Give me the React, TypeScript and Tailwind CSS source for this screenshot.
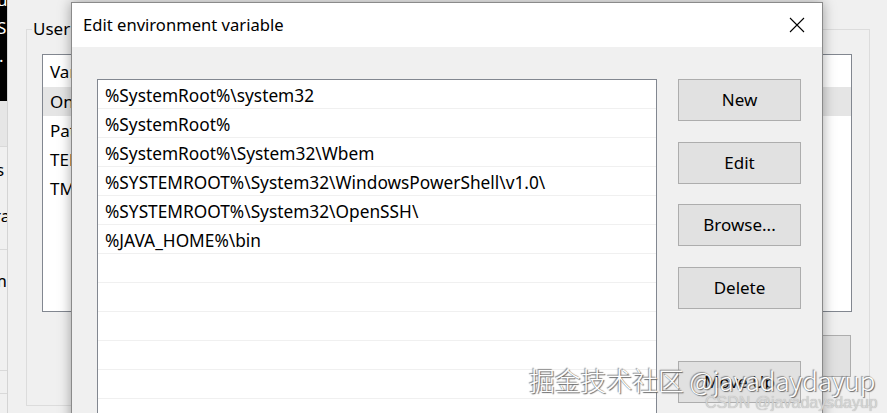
const paths = [
  '%SystemRoot%\\system32',
  '%SystemRoot%',
  '%SystemRoot%\\System32\\Wbem',
  '%SYSTEMROOT%\\System32\\WindowsPowerShell\\v1.0\\',
  '%SYSTEMROOT%\\System32\\OpenSSH\\',
  '%JAVA_HOME%\\bin',
  '',
  '',
  '',
  '',
  '',
  '',
];

const userVars = ['OneDrive', 'Path', 'TEMP', 'TMP'];

const WinButton = ({ label, className = '' }: { label: string; className?: string }) => (
  <button
    className={`w-[123px] h-[42px] bg-[#e1e1e1] border border-[#adadad] text-[17px] text-black ${className}`}
  >
    {label}
  </button>
);

export default function App() {
  return (
    <div className="relative w-[887px] h-[413px] overflow-hidden bg-[#f0f0f0] flex font-['Segoe_UI','Noto_Sans',sans-serif] text-black">
      {/* window behind, left edge */}
      <div className="w-[7px] flex flex-col shrink-0">
        <div className="h-[101px] bg-black text-white text-[17px] leading-[28px] overflow-hidden">
          <div className="-mt-[14px] -ml-[3px]">u</div>
          <div className="-ml-[3px]">S</div>
          <div className="-ml-[1px]">.</div>
        </div>
        <div className="h-[46px] bg-[#e6e6e6] border-b border-[#d9d9d9]" />
        <div className="h-[103px] text-[17px] leading-[46px] overflow-hidden border-b border-[#d9d9d9]">
          <div className="-ml-[4px]">s</div>
          <div className="-ml-[6px]">ra</div>
        </div>
        <div className="h-[121px] text-[17px] leading-[62px] overflow-hidden border-b border-[#d9d9d9]">
          <div className="-ml-[9px]">m</div>
        </div>
        <div className="h-[23px] border-b border-[#d9d9d9]" />
      </div>

      {/* Environment Variables window */}
      <div className="flex-1 border-l border-[#d4d4d4] pl-[18px]">
        <fieldset className="mt-[18px] w-[844px] h-[388px] border border-[#dcdcdc] pl-[15px] pr-[17px]">
          <legend className="-ml-[10px] px-[1px] text-[17px] leading-[22px]">User variables for javadaydayup</legend>
          <div className="mt-[14px] h-[258px] bg-white border border-[#828790] pl-[7px] text-[17px]">
            <div className="h-[32px] leading-[34px]">Variable</div>
            {userVars.map((v, i) => (
              <div
                key={v}
                className={`h-[29px] leading-[29px] -ml-[7px] pl-[7px] ${i === 0 ? 'bg-[#e5e5e5]' : ''}`}
              >
                {v}
              </div>
            ))}
          </div>
          <div className="mt-[23px] flex justify-end gap-[10px] pr-[1px]">
            <WinButton label="New..." className="w-[110px]" />
            <WinButton label="Edit..." className="w-[110px]" />
            <button className="w-[110px] h-[42px] bg-[#e1e1e1] border border-[#adadad] text-[17px]">Delete</button>
          </div>
        </fieldset>
      </div>

      {/* Edit environment variable dialog */}
      <div className="absolute left-[71px] top-[2px] w-[752px] h-[440px] bg-[#f0f0f0] border border-[#8a8a8a] shadow-[0_0_12px_rgba(0,0,0,0.35)] flex flex-col">
        <div className="h-[44px] bg-white flex items-center justify-between pl-[11px] pr-[17px] shrink-0">
          <span className="text-[16.6px]">Edit environment variable</span>
          <svg width="16" height="16" viewBox="0 0 16 16" className="text-black">
            <path d="M1 1 L15 15 M15 1 L1 15" stroke="currentColor" strokeWidth="1.1" fill="none" />
          </svg>
        </div>
        <div className="flex pl-[25px] pt-[32px] gap-[21px]">
          <div className="w-[560px] h-[400px] bg-white border border-[#828790] text-[17.3px]">
            {paths.map((p, i) => (
              <div key={i} className="h-[29px] leading-[31px] pl-[7px] border-b border-[#f0f0f0] whitespace-nowrap">
                {p}
              </div>
            ))}
          </div>
          <div className="flex flex-col pt-[0px]">
            <WinButton label="New" />
            <WinButton label="Edit" className="mt-[21px]" />
            <WinButton label="Browse..." className="mt-[20px]" />
            <WinButton label="Delete" className="mt-[21px]" />
            <WinButton label="Move Up" className="mt-[52px]" />
          </div>
        </div>
      </div>

      {/* watermark */}
      <div className="absolute left-[529px] top-[364px] text-[25.8px] leading-[32px] text-white font-['Noto_Sans_CJK_SC',sans-serif] font-light [text-shadow:1px_1px_1px_#666,-1px_-1px_1px_#888] whitespace-nowrap">
        掘金技术社区 @javadaydayup
      </div>
      <div className="absolute left-[705px] top-[393px] text-[16px] leading-[20px] text-[#d4d4d4] font-['Liberation_Sans',sans-serif] [text-shadow:0_0_1px_#aaa] whitespace-nowrap">
        CSDN @javadaysdayup
      </div>
    </div>
  );
}
